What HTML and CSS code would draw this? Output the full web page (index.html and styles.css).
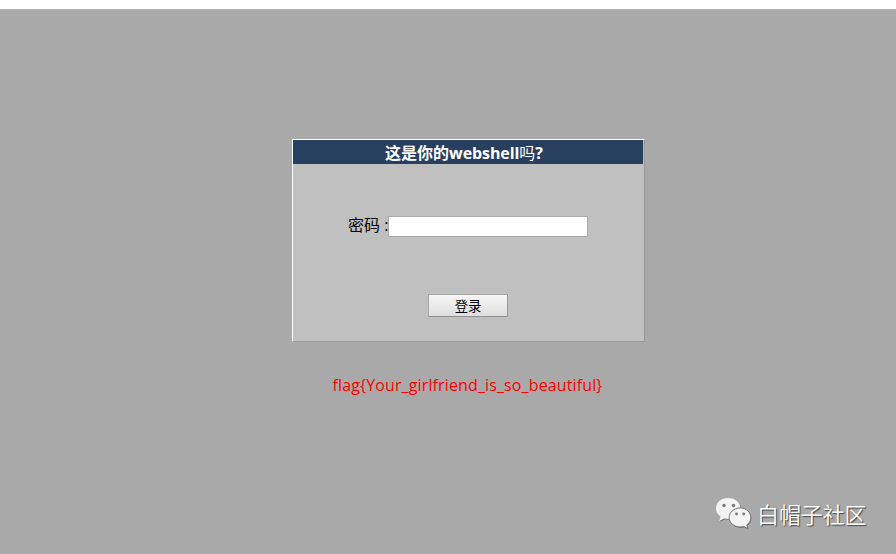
FILE: index.html
```
<!DOCTYPE html>
<html lang="zh-CN">
<head>
<meta charset="utf-8">
<title>webshell</title>
<link rel="stylesheet" href="styles.css">
</head>
<body>
<main class="page">
  <form class="panel">
    <h1 class="title">这是你的<span class="title-latin">webshell</span><span class="title-light">吗</span>?</h1>
    <div class="field"><label for="pw">密码 :</label><input id="pw" class="password" type="password"></div>
    <button class="login" type="button">登录</button>
  </form>
  <p class="flag">flag{Your_girlfriend_is_so_beautiful}</p>
</main>
<div class="watermark">
  <svg class="wechat" width="38" height="34" viewBox="0 0 38 34">
    <g class="shade" transform="translate(.6 .8)">
      <path d="M13 1C6 1 1 5.500 1 11.500c0 3.500 1.700 6.200 4.500 8.200L4.200 24l5-2.600c1.300.3 2.500.5 3.800.5 7 0 12.500-4.400 12.500-10.400S20 1 13 1z"/>
      <path d="M25.200 11C19 11 14.200 15.200 14.200 20.500S19 30 25.200 30c1.300 0 2.500-.2 3.600-.5l4 2-1-3.600c2.400-1.700 4-4.300 4-7.400 0-5.300-4.600-9.500-10.600-9.500z"/>
    </g>
    <path class="bubble" d="M13 1C6 1 1 5.500 1 11.500c0 3.500 1.700 6.200 4.500 8.200L4.200 24l5-2.600c1.300.3 2.500.5 3.800.5 7 0 12.500-4.400 12.500-10.400S20 1 13 1z"/>
    <path class="bubble front" d="M25.200 11C19 11 14.200 15.200 14.200 20.500S19 30 25.200 30c1.300 0 2.500-.2 3.600-.5l4 2-1-3.600c2.400-1.700 4-4.300 4-7.400 0-5.300-4.600-9.500-10.600-9.500z"/>
    <g class="eyes"><circle cx="9" cy="8.500" r="1.700"/><circle cx="18.500" cy="8.500" r="1.700"/><circle cx="21.500" cy="17" r="1.400"/><circle cx="28.700" cy="17" r="1.400"/></g>
  </svg>
  <span class="account">白帽子社区</span>
</div>
</body>
</html>
```
FILE: styles.css
```
* { box-sizing: border-box; }
body {
  margin: 0;
  height: 554px;
  overflow: hidden;
  background: #fff;
  color: #000;
  font: 16px/22px "Open Sans", "Noto Sans CJK SC", sans-serif;
}
.page {
  height: 545px;
  margin-top: 9px;
  padding: 130px 0 0 292px;
  border-top: 1px solid #b4b4b4;
  background: #a9a9a9;
}
.panel {
  width: 353px;
  height: 203px;
  margin-top: -1px;
  border: 1px solid;
  border-color: #fff #999 #999 #fff;
  background: #c0c0c0;
}
.title {
  width: 350px;
  height: 24px;
  margin: 0;
  padding-right: 8px;
  background: #293f60;
  color: #fff;
  font-size: 16px;
  font-weight: 700;
  line-height: 26px;
  text-align: center;
  white-space: nowrap;
}
.title-latin { letter-spacing: -0.1px; }
.title-light { font-weight: 400; }
.field {
  display: flex;
  height: 21px;
  margin: 52px 0 0 55px;
}
.field label {
  width: 40px;
  line-height: 19px;
  white-space: nowrap;
}
.password {
  width: 200px;
  height: 21px;
  padding: 1px;
  border: 1px solid #a9a9a9;
  border-radius: 0;
  background: #fff;
  outline: 0;
}
.login {
  display: block;
  width: 80px;
  height: 23px;
  margin: 57px 0 0 135px;
  padding: 0;
  border: 1px solid;
  border-color: #a6a6a6 #999 #8f8f8f #a6a6a6;
  border-radius: 1px;
  background: linear-gradient(#f6f6f6, #dedede);
  color: #000;
  font: 13.33px/21px "Noto Sans CJK SC", sans-serif;
}
.flag {
  width: 351px;
  margin: 32px 0 0;
  color: #f00;
  letter-spacing: 0.13px;
  text-align: center;
  white-space: nowrap;
}
.watermark {
  position: absolute;
  left: 715px;
  top: 497px;
  display: flex;
  gap: 4px;
  color: #fff;
  font: 350 22px/32px "Noto Sans CJK SC", sans-serif;
  text-shadow: 1px 1px 1px #444;
  white-space: nowrap;
}
.account { letter-spacing: -0.1px; }
.wechat { display: block; }
.shade { fill: #666; }
.bubble { fill: #f3f3f3; }
.front { stroke: #777; stroke-width: 1; }
.eyes { fill: #777; }
```
